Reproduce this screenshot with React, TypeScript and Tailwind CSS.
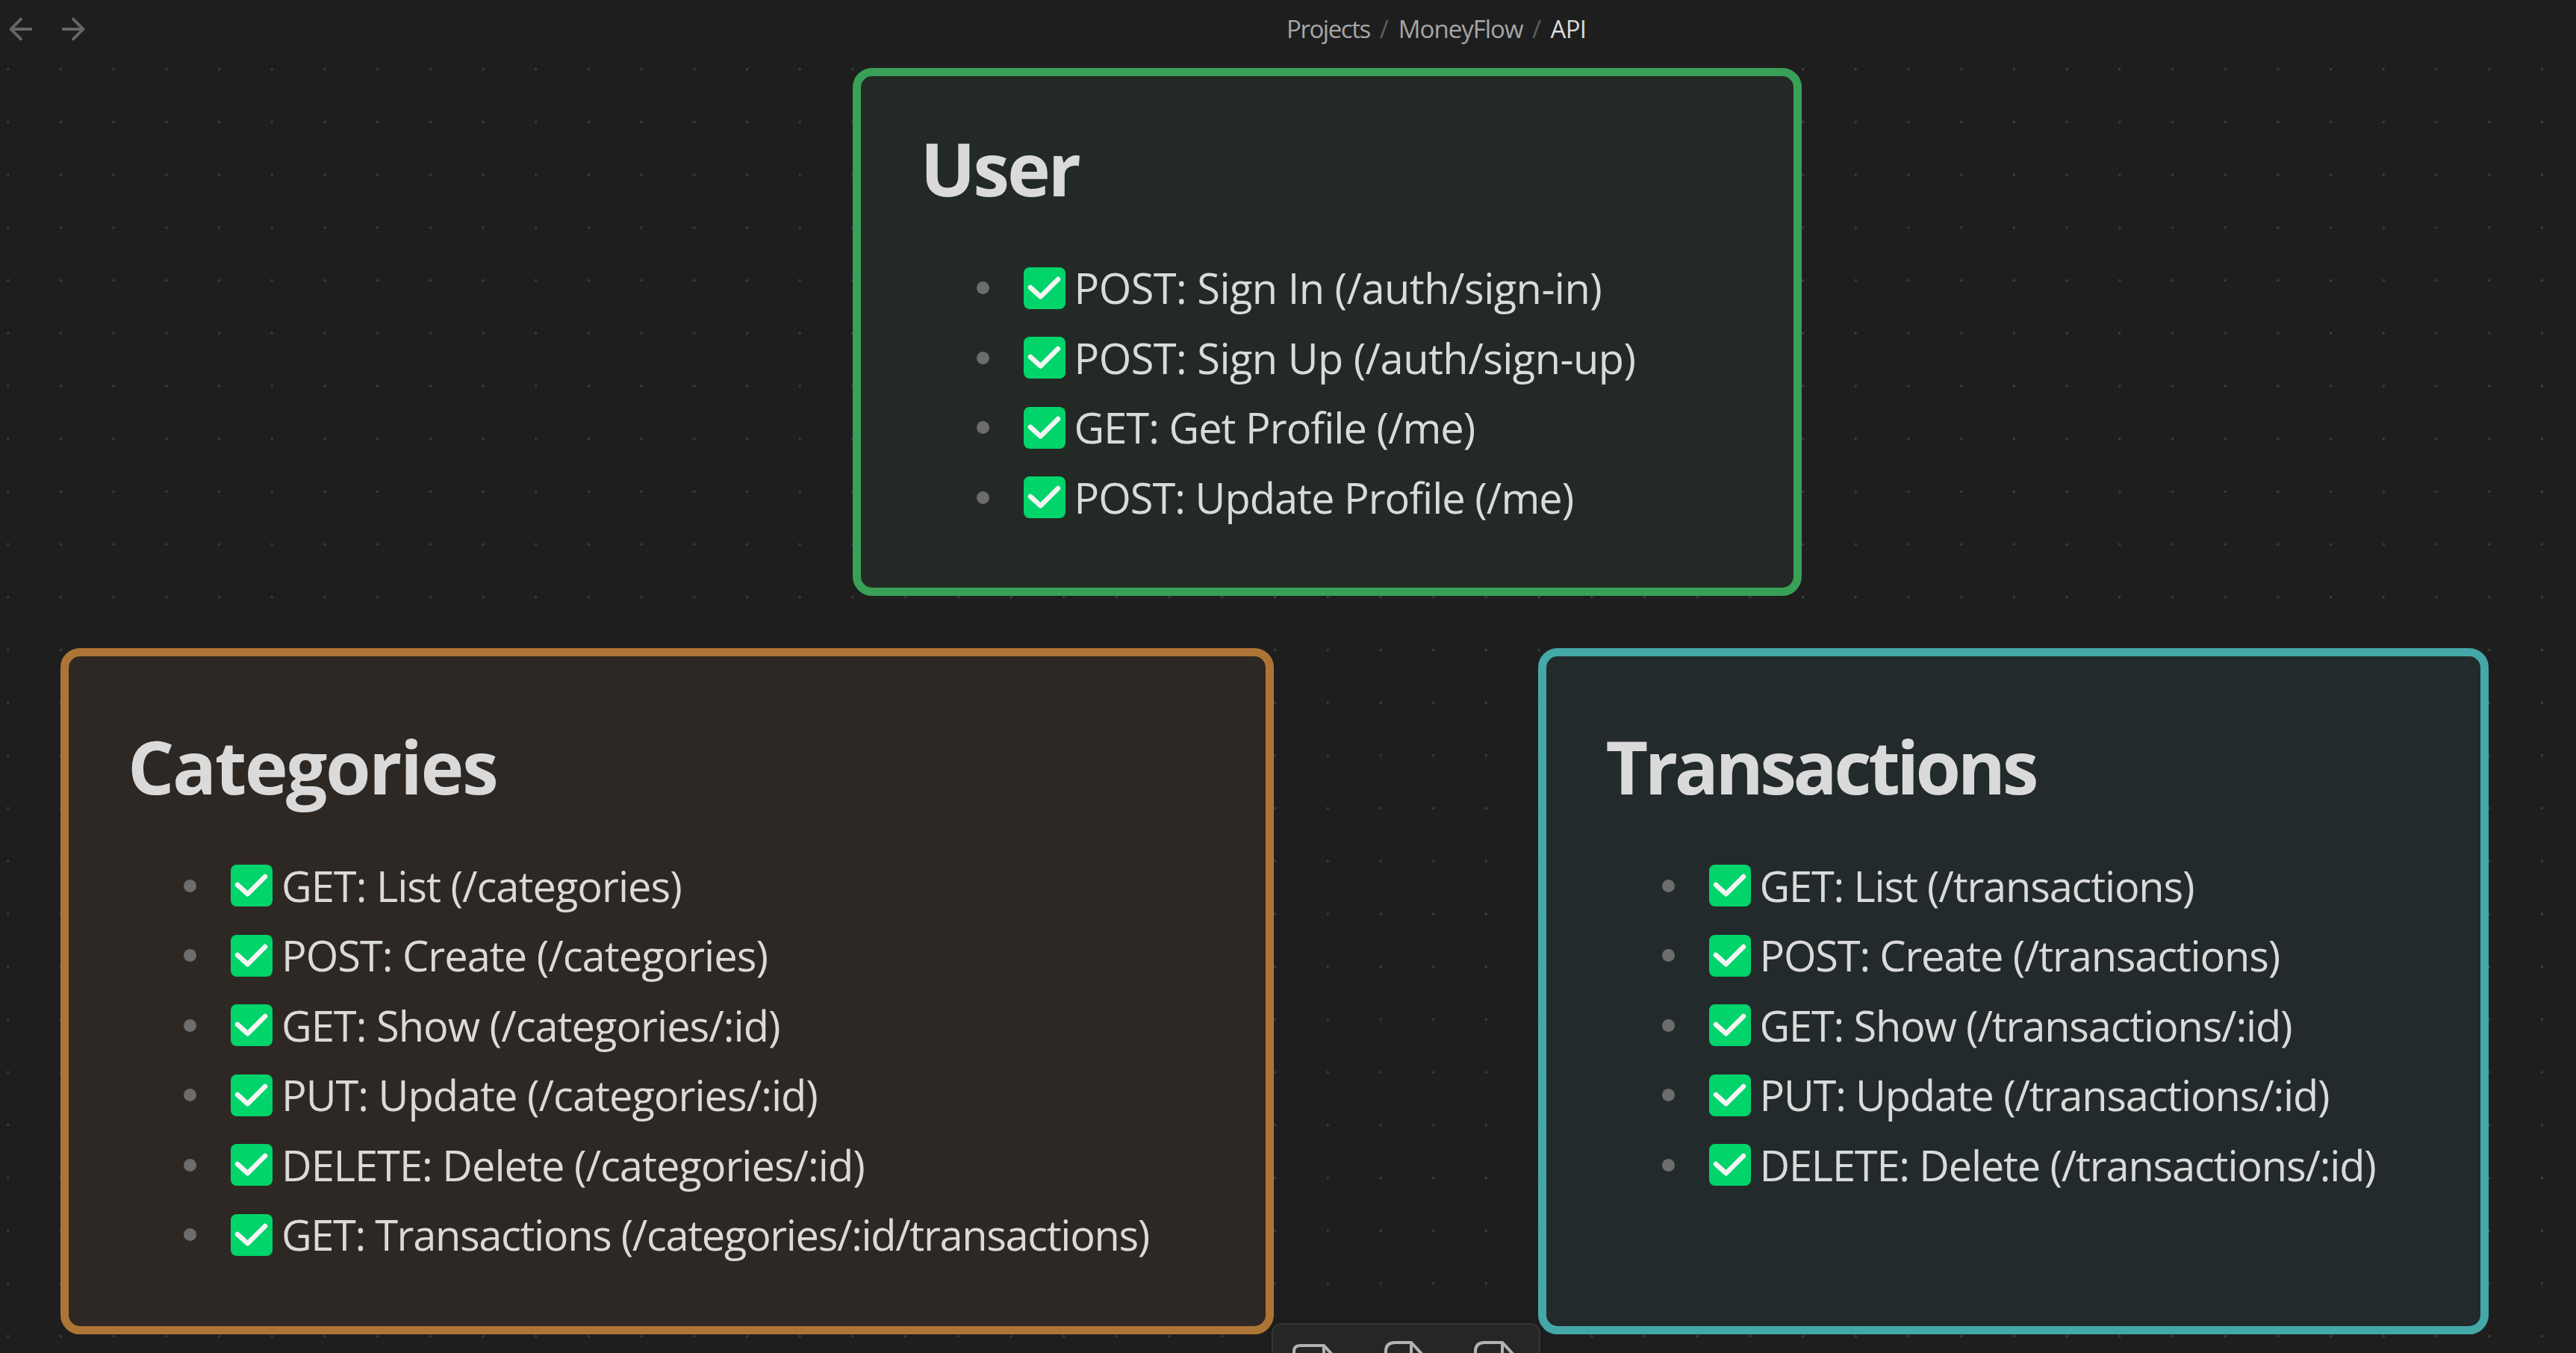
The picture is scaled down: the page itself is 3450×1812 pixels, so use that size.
import { ArrowLeft, ArrowRight } from "lucide-react";

type Item = { text: string; track: string };

function Check() {
  return (
    <span className="mr-[12px] h-[56px] w-[56px] shrink-0 rounded-[8px] bg-[#00d46a]">
      <svg viewBox="0 0 56 56" className="h-[56px] w-[56px]" fill="none">
        <path d="M9 27 L22.7 39.3 L46 16" stroke="#f4f4f4" strokeWidth="6.5" strokeLinecap="round" strokeLinejoin="round" />
      </svg>
    </span>
  );
}

function Row({ item }: { item: Item }) {
  return (
    <li className="flex h-[93.5px] items-center">
      <span className="ml-[70px] h-[17px] w-[17px] shrink-0 rounded-full bg-[#6d6d6d]" />
      <span className="w-[46px] shrink-0" />
      <Check />
      <span className={"whitespace-nowrap text-[56px] leading-[93.5px] text-[#dadada] " + item.track}>{item.text}</span>
    </li>
  );
}

function Card({ title, items, box, pad, titleTrack }: { title: string; items: Item[]; box: string; pad: string; titleTrack: string }) {
  return (
    <section className={box}>
      <div className={pad}>
        <h2 className={"-ml-[5px] mb-[49px] text-[98px] font-bold leading-[130px] text-[#dadada] " + titleTrack}>{title}</h2>
        <ul>
          {items.map((t) => (
            <Row key={t.text} item={t} />
          ))}
        </ul>
      </div>
    </section>
  );
}

function ToolIcon({ top, fold, r }: { top: string; fold: number; r: number }) {
  return (
    <svg viewBox="0 0 70 40" className={top} fill="none" stroke="#b3b3b3" strokeWidth="4">
      <path d={`M2 40 V${r + 2} Q2 2 ${r + 2} 2 H${fold} L${fold + 26} 30`} />
      <path d={`M${fold} 2 V40`} />
    </svg>
  );
}

const sign = "tracking-[-0.55px]";
const base = "tracking-[-1px]";
const tx = "tracking-[-1.2px]";

export default function App() {
  return (
    <div className="relative h-[1812px] w-[3450px] overflow-hidden bg-[#1e1e1e] font-['Open_Sans',sans-serif]">
      <header className="relative z-10 flex h-[80px] items-start bg-[#1e1e1e]">
        <div className="flex pl-[5px] pt-[16px] text-[#666666]">
          <ArrowLeft size={46} strokeWidth={2} />
          <ArrowRight size={46} strokeWidth={2} className="ml-[24px]" />
        </div>
        <nav className="ml-[1602px] flex items-center pt-[14px] text-[33px] leading-[50px]">
          <span className="tracking-[-1.45px] text-[#a6a6a6]">Projects</span>
          <span className="mx-[13px] text-[#5f5f5f]">/</span>
          <span className="tracking-[-1px] text-[#a6a6a6]">MoneyFlow</span>
          <span className="mx-[12.5px] text-[#5f5f5f]">/</span>
          <span className="tracking-[-0.75px] text-[#dadada]">API</span>
        </nav>
      </header>

      <main className="absolute inset-0 bg-[radial-gradient(circle,#3a3a3a_1.6px,transparent_2.2px)] bg-[size:70.71px_70.71px] bg-[position:-24.65px_-13.35px]">
        <Card
          title="User"
          titleTrack="tracking-[-3.2px]"
          box="absolute left-[1142px] top-[90.5px] h-[707px] w-[1271px] rounded-[26px] border-[11px] border-[#38a057] bg-[#232a25]"
          pad="pl-[84.5px] pt-[58.5px]"
          items={[
            { text: "POST: Sign In (/auth/sign-in)", track: sign },
            { text: "POST: Sign Up (/auth/sign-up)", track: sign },
            { text: "GET: Get Profile (/me)", track: base },
            { text: "POST: Update Profile (/me)", track: base },
          ]}
        />
        <Card
          title="Categories"
          titleTrack="tracking-[-2.5px]"
          box="absolute left-[80.5px] top-[868px] h-[919px] w-[1625.5px] rounded-[26px] border-[11px] border-[#ad7535] bg-[#2d2823]"
          pad="pl-[84.5px] pt-[81.5px]"
          items={[
            { text: "GET: List (/categories)", track: base },
            { text: "POST: Create (/categories)", track: base },
            { text: "GET: Show (/categories/:id)", track: base },
            { text: "PUT: Update (/categories/:id)", track: base },
            { text: "DELETE: Delete (/categories/:id)", track: base },
            { text: "GET: Transactions (/categories/:id/transactions)", track: "tracking-[-1.36px]" },
          ]}
        />
        <Card
          title="Transactions"
          titleTrack="tracking-[-4.5px]"
          box="absolute left-[2060px] top-[868px] h-[919px] w-[1272.5px] rounded-[26px] border-[11px] border-[#43a8a7] bg-[#232a2c]"
          pad="pl-[84.5px] pt-[81.5px]"
          items={[
            { text: "GET: List (/transactions)", track: tx },
            { text: "POST: Create (/transactions)", track: tx },
            { text: "GET: Show (/transactions/:id)", track: tx },
            { text: "PUT: Update (/transactions/:id)", track: tx },
            { text: "DELETE: Delete (/transactions/:id)", track: tx },
          ]}
        />
      </main>

      <div className="absolute left-[1703px] top-[1772px] z-10 flex h-[60px] w-[360px] rounded-t-[13px] border-2 border-[#363636] bg-[#262626] shadow-[0_0_10px_rgba(0,0,0,0.25)]">
        <ToolIcon top="absolute left-[26px] top-[26px] h-[40px] w-[70px]" fold={42} r={8} />
        <ToolIcon top="absolute left-[149px] top-[22px] h-[40px] w-[70px]" fold={36} r={12} />
        <ToolIcon top="absolute left-[269px] top-[22px] h-[40px] w-[70px]" fold={38} r={12} />
      </div>
    </div>
  );
}
